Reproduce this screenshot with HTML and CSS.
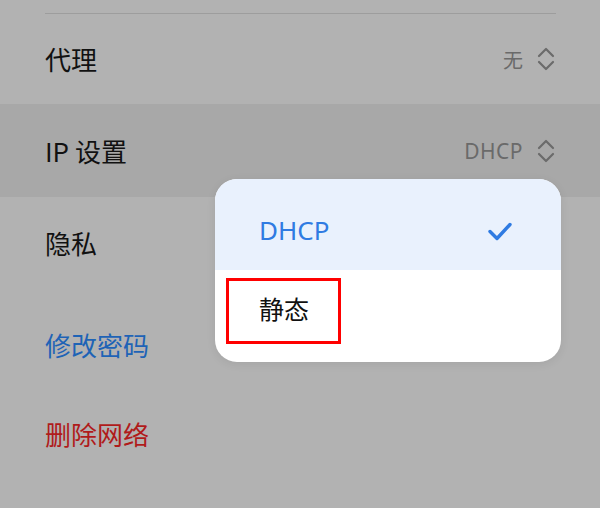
FILE: index.html
```html
<!DOCTYPE html>
<html lang="zh-CN">
<head>
<meta charset="utf-8">
<link rel="stylesheet" href="styles.css">
</head>
<body>
<div class="screen">
  <div class="divider"></div>
  <div class="row row-proxy">
    <span class="label">代理</span>
    <span class="value">无
      <svg class="chev" viewBox="0 0 18 26" width="18" height="26"><path d="M2 10 L9 3 L16 10 M2 16 L9 23 L16 16" fill="none" stroke="#6b6b6b" stroke-width="2.2" stroke-linecap="round" stroke-linejoin="round"/></svg>
    </span>
  </div>
  <div class="row row-ip active">
    <span class="label">IP 设置</span>
    <span class="value latin">DHCP
      <svg class="chev" viewBox="0 0 18 26" width="18" height="26"><path d="M2 10 L9 3 L16 10 M2 16 L9 23 L16 16" fill="none" stroke="#6b6b6b" stroke-width="2.2" stroke-linecap="round" stroke-linejoin="round"/></svg>
    </span>
  </div>
  <div class="row row-privacy">
    <span class="label">隐私</span>
  </div>
  <div class="row row-pwd">
    <span class="label link">修改密码</span>
  </div>
  <div class="row row-del">
    <span class="label danger">删除网络</span>
  </div>

  <div class="menu">
    <div class="menu-item selected">
      <span class="menu-text latin">DHCP</span>
      <svg class="check" viewBox="0 0 26 22" width="26" height="22"><path d="M3 11.5 L10 18.5 L23 4.5" fill="none" stroke="#2f7be2" stroke-width="3.4" stroke-linecap="round" stroke-linejoin="round"/></svg>
    </div>
    <div class="menu-item plain">
      <span class="menu-text">静态</span>
      <div class="highlight-box"></div>
    </div>
  </div>
</div>
</body>
</html>
```

FILE: styles.css
```css
html, body {
  margin: 0;
  padding: 0;
}
body {
  background: #b2b2b2;
  font-family: "Noto Sans CJK SC", "Noto Sans", sans-serif;
  color: #111;
}
.screen {
  position: relative;
  width: 600px;
  height: 508px;
  overflow: hidden;
  padding-top: 13px;
  box-sizing: border-box;
}
.divider {
  height: 1px;
  background: #9d9d9d;
  margin: 0 44px 0 45px;
}
.row {
  display: flex;
  align-items: center;
  justify-content: space-between;
  padding: 0 45px 0 45px;
  box-sizing: border-box;
}
.row-proxy { height: 90px; }
.row-ip { height: 93px; }
.row-privacy { height: 92px; }
.row-pwd { height: 112px; }
.row-del { height: 66px; }
.active {
  background: #a8a8a8;
}
.label {
  font-size: 26px;
  line-height: 1;
  color: #111;
}
.link { color: #1e63b6; }
.danger { color: #b01b1b; }
.value {
  display: flex;
  align-items: center;
  gap: 14px;
  font-size: 20px;
  color: #6a6a6a;
}
.latin {
  font-family: "Noto Sans", sans-serif;
}
.row .latin {
  font-size: 21px;
  letter-spacing: 0.5px;
}
.chev {
  display: block;
}
.menu {
  position: absolute;
  left: 215px;
  top: 179px;
  width: 346px;
  border-radius: 22px;
  overflow: hidden;
  background: #fff;
  box-shadow: 0 2px 10px rgba(0, 0, 0, 0.08);
}
.menu-item {
  position: relative;
  display: flex;
  align-items: center;
  justify-content: space-between;
  padding: 0 48px 0 44px;
  box-sizing: border-box;
}
.selected {
  height: 91px;
  padding-top: 12px;
  background: #e9f1fd;
}
.plain {
  height: 92px;
  align-items: flex-start;
  padding-top: 23px;
}
.menu-text {
  font-size: 26px;
  line-height: 1.2;
}
.selected .menu-text {
  color: #2f7be2;
}
.plain .menu-text {
  font-size: 25px;
  color: #111;
}
.check {
  display: block;
}
.highlight-box {
  position: absolute;
  left: 11px;
  top: 8px;
  width: 115px;
  height: 66px;
  border: 3px solid #f00;
  box-sizing: border-box;
}
```
